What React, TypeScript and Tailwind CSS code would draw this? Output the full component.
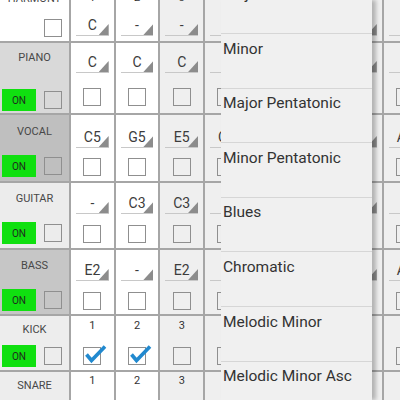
import React from 'react';

const gray = [false, false, true, true, false, false, true, true];

const melodic = [
	{ name: 'PIANO', h: 'h-[70px]', bg: 'bg-[#d9d9d9]', lpt: 'pt-[8px]', onMb: 'mb-[2px]', spinMt: 'mt-[10px]', cbMb: 'mb-[7px]', notes: ['C', 'C', 'C', 'C', 'C', 'C', 'C', 'C'] },
	{ name: 'VOCAL', h: 'h-[66px]', bg: 'bg-[#bfbfbf]', lpt: 'pt-[10px]', onMb: 'mb-[4px]', spinMt: 'mt-[13px]', cbMb: 'mb-[5px]', notes: ['C5', 'G5', 'E5', 'C5', 'E5', 'G5', 'E5', 'A5'] },
	{ name: 'GUITAR', h: 'h-[65px]', bg: 'bg-[#ececec]', lpt: 'pt-[9px]', onMb: 'mb-[4px]', spinMt: 'mt-[11px]', cbMb: 'mb-[5px]', notes: ['-', 'C3', 'C3', '-', 'C3', 'C3', '-', '-'] },
	{ name: 'BASS', h: 'h-[64px]', bg: 'bg-[#c6c6c6]', lpt: 'pt-[9px]', onMb: 'mb-[3px]', spinMt: 'mt-[11px]', cbMb: 'mb-[4px]', notes: ['E2', '-', 'E2', '-', 'E2', '-', 'E2', 'A2'] }
];

const scales = ['Major', 'Minor', 'Major Pentatonic', 'Minor Pentatonic', 'Blues', 'Chromatic', 'Melodic Minor', 'Melodic Minor Asc'];

const cellBg = (i: number) => (gray[i] ? 'bg-[#efefef]' : 'bg-white');

const Box = ({ checked = false, className = '' }: { checked?: boolean; className?: string }) => (
	<div className={`relative w-[18px] h-[18px] shrink-0 border-[1.5px] border-[#8f8f8f] ${className}`}>
		{checked && (
			<svg className="absolute left-[-1.5px] top-[-4.5px] w-[26px] h-[22px] overflow-visible" viewBox="0 0 26 22">
				<path d="M3.5 10.5 L8.5 16.5 L22 2.5" fill="none" stroke="#2189cf" strokeWidth="3.6" strokeLinejoin="miter" />
			</svg>
		)}
	</div>
);

const Spinner = ({ value, className = '' }: { value: string; className?: string }) => (
	<div className={`relative mx-[5px] h-[20px] border-b border-[#c8c8c8] ${className}`}>
		<div className="text-center text-[14px] leading-[18px] text-[#3c3c3c]">{value}</div>
		<div className="absolute right-0 bottom-0 w-[10px] h-[11px] bg-[#8c8c8c] [clip-path:polygon(100%_0,100%_100%,0_100%)]" />
	</div>
);

const OnButton = () => (
	<div className="w-[34px] h-[22px] bg-[#10e010] flex items-center justify-center text-[10px] text-[#1f2a1f]">ON</div>
);

const Label = ({ name, bg, pt, mb, h }: { name: string; bg: string; pt: string; mb: string; h: string }) => (
	<div className={`w-[69px] shrink-0 flex flex-col ${bg} ${h}`}>
		<div className={`text-center text-[11px] leading-[14px] text-[#484848] ${pt}`}>{name}</div>
		<div className={`mt-auto flex items-center pl-[2px] gap-[8px] ${mb}`}>
			<OnButton />
			<Box />
		</div>
	</div>
);

export default function App() {
	return (
		<div className="relative w-[400px] h-[400px] overflow-hidden bg-[#a6a6a6] [font-family:Roboto,sans-serif]">
			<div className="flex flex-col gap-[2px] -mt-[12px]">
				{/* harmony */}
				<div className="flex gap-[2px] h-[53px]">
					<div className="w-[69px] shrink-0 bg-white flex flex-col">
						<div className="text-center text-[11px] leading-[14px] text-[#484848] pt-[4px]">HARMONY</div>
						<Box className="mt-auto mb-[4px] ml-[44px]" />
					</div>
					{gray.map((_, i) => (
						<div key={i} className={`w-[42.7px] shrink-0 flex flex-col ${cellBg(i)}`}>
							<div className="text-center text-[11px] leading-[14px] text-[#333] pt-[3px]">{i + 1}</div>
							<Spinner value={i === 0 ? 'C' : '-'} className="mt-auto mb-[5px]" />
						</div>
					))}
				</div>

				{melodic.map((row) => (
					<div key={row.name} className={`flex gap-[2px] ${row.h}`}>
						<Label name={row.name} bg={row.bg} pt={row.lpt} mb={row.onMb} h={row.h} />
						{row.notes.map((n, i) => (
							<div key={i} className={`w-[42.7px] shrink-0 flex flex-col ${cellBg(i)}`}>
								<Spinner value={n} className={row.spinMt} />
								<Box className={`mt-auto self-center ${row.cbMb}`} />
							</div>
						))}
					</div>
				))}

				{/* kick */}
				<div className="flex gap-[2px] h-[54px]">
					<Label name="KICK" bg="bg-[#ededed]" pt="pt-[7px]" mb="mb-[3px]" h="h-[54px]" />
					{gray.map((_, i) => (
						<div key={i} className={`w-[42.7px] shrink-0 flex flex-col ${cellBg(i)}`}>
							<div className="text-center text-[11px] leading-[14px] text-[#333] pt-[3px]">{i + 1}</div>
							<Box checked={i < 2} className="mt-auto self-center mb-[5px]" />
						</div>
					))}
				</div>

				{/* snare */}
				<div className="flex gap-[2px] h-[54px]">
					<Label name="SNARE" bg="bg-[#ededed]" pt="pt-[7px]" mb="mb-[3px]" h="h-[54px]" />
					{gray.map((_, i) => (
						<div key={i} className={`w-[42.7px] shrink-0 flex flex-col ${cellBg(i)}`}>
							<div className="text-center text-[11px] leading-[14px] text-[#333] pt-[2px]">{i + 1}</div>
							<Box className="mt-auto self-center mb-[5px]" />
						</div>
					))}
				</div>
			</div>

			{/* scale dropdown */}
			<div className="absolute left-[221px] top-0 w-[151px] h-[400px] overflow-hidden bg-[#f0f0f0] shadow-[4px_0_4px_rgba(0,0,0,0.25)]">
				<div className="-mt-[20.6px]">
					{scales.map((s) => (
						<div key={s} className="h-[54.6px] box-border border-b border-[#d6d6d6] pl-[2px] pt-[4.6px] text-[15.5px] leading-[20px] text-[#333] whitespace-nowrap">
							{s}
						</div>
					))}
				</div>
			</div>
		</div>
	);
}
